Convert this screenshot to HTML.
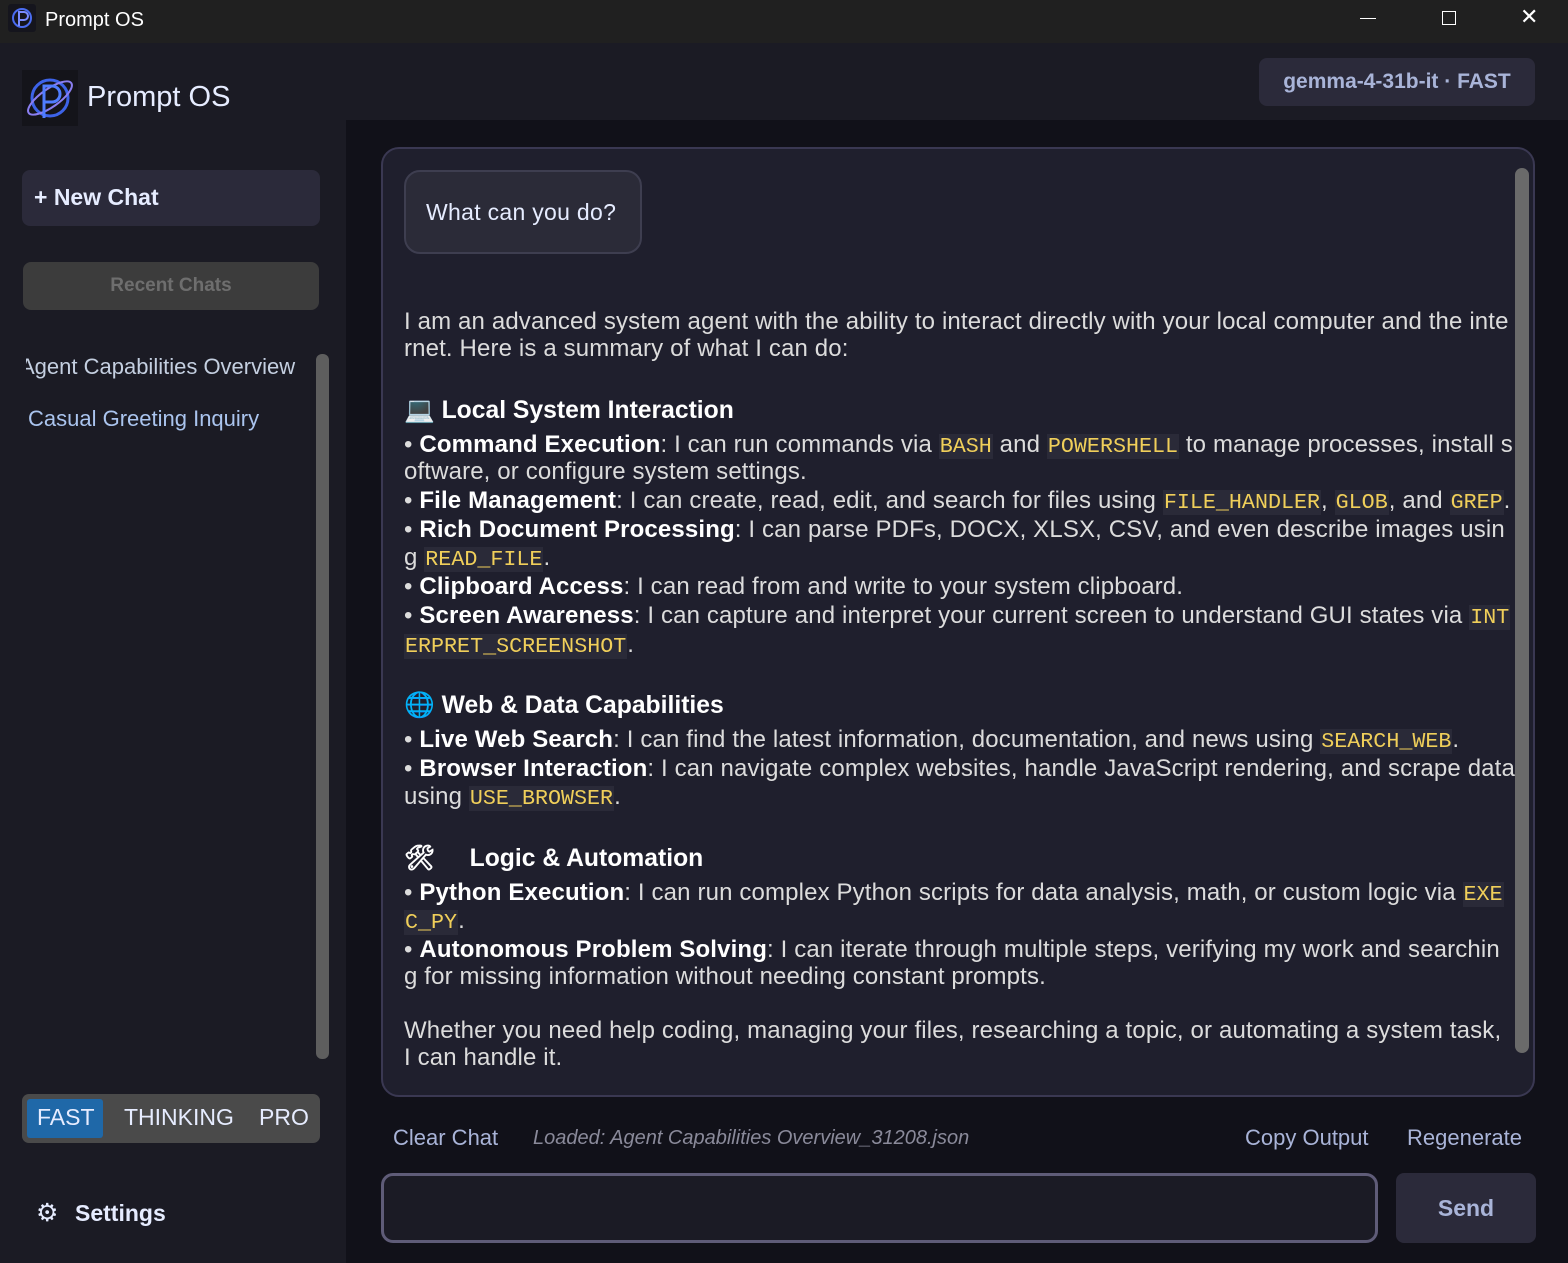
<!DOCTYPE html>
<html><head><meta charset="utf-8"><style>
*{margin:0;padding:0;box-sizing:border-box}
body{width:1568px;height:1263px;background:#111119;font-family:"Liberation Sans",sans-serif;position:relative;overflow:hidden;color:#dcdcdc}
.a{position:absolute;white-space:nowrap}
.tb{left:0;top:0;width:1568px;height:43px;background:#202020}
.side{left:0;top:43px;width:346px;height:1220px;background:#1b1b24}
.topbar{left:346px;top:43px;width:1222px;height:77px;background:#1b1b24}
.L{position:absolute;left:404px;font-size:24px;letter-spacing:0.14px;line-height:28px;white-space:nowrap;color:#dcdcdc}
.H{font-weight:bold;color:#fff;font-size:24.7px;letter-spacing:0}
b{color:#fff}
code{font-family:"Liberation Mono",monospace;color:#f0cf5a;background:#2a2a38;font-size:21.7px;letter-spacing:0;padding:0 1px}
</style></head><body>
<div class="a tb"></div>
<div class="a" style="left:8px;top:4px;width:28px;height:28px;background:#15151d;border-radius:3px"><svg width="28" height="28"><circle cx="14" cy="14" r="9" fill="none" stroke="#4a6cf0" stroke-width="2"/><path d="M11 22V8h5a4 4 0 010 8h-5" fill="none" stroke="#7a8cff" stroke-width="2"/></svg></div>
<div class="a" style="left:45px;top:9px;font-size:20px;color:#fff">Prompt OS</div>
<div class="a" style="left:1360px;top:18px;width:16px;height:1px;background:#fff"></div>
<div class="a" style="left:1442px;top:11px;width:14px;height:14px;border:1px solid #fff"></div>
<div class="a" style="left:1520px;top:4px;font-size:22px;color:#fff">✕</div>
<div class="a side"></div>
<div class="a topbar"></div>
<div class="a" style="left:22px;top:70px;width:56px;height:56px;background:#14141a"><svg width="56" height="56"><circle cx="28" cy="28" r="18" fill="none" stroke="#3d63e8" stroke-width="3"/><ellipse cx="28" cy="28" rx="26" ry="9" transform="rotate(-35 28 28)" fill="none" stroke="#8a7ef0" stroke-width="2"/><path d="M22 48V16h8a8 8 0 010 16h-8" fill="none" stroke="#4f7dff" stroke-width="3"/></svg></div>
<div class="a" style="left:87px;top:81px;font-size:29px;color:#e6ecff">Prompt OS</div>
<div class="a" style="left:22px;top:170px;width:298px;height:56px;background:#2b2a3a;border-radius:8px"></div>
<div class="a" style="left:34px;top:184px;font-size:23px;font-weight:bold;color:#e6ecff">+ New Chat</div>
<div class="a" style="left:23px;top:262px;width:296px;height:48px;background:#3c3c3c;border-radius:8px;text-align:center;line-height:48px;font-size:19px;font-weight:bold;color:#6e6e6e">Recent Chats</div>
<div class="a" style="left:26px;top:354px;width:274px;overflow:hidden;font-size:22px;color:#c4cfe0"><span style="margin-left:-6px">Agent Capabilities Overview</span></div>
<div class="a" style="left:28px;top:406px;font-size:22px;color:#aac4ee">Casual Greeting Inquiry</div>
<div class="a" style="left:316px;top:354px;width:13px;height:705px;background:#5e5e5e;border-radius:6px"></div>
<div class="a" style="left:22px;top:1094px;width:298px;height:49px;background:#4a4a4a;border-radius:7px"></div>
<div class="a" style="left:27px;top:1099px;width:76px;height:39px;background:#1f68a8;border-radius:3px"></div>
<div class="a" style="left:37px;top:1104px;font-size:23px;color:#e6ecff">FAST</div>
<div class="a" style="left:124px;top:1104px;font-size:23px;color:#e6ecff">THINKING</div>
<div class="a" style="left:259px;top:1104px;font-size:23px;color:#e6ecff">PRO</div>
<div class="a" style="left:36px;top:1198px;font-size:25px;color:#e6ecff">⚙</div>
<div class="a" style="left:75px;top:1200px;font-size:23px;font-weight:bold;color:#e6ecff">Settings</div>
<div class="a" style="left:1259px;top:58px;width:276px;height:48px;background:#2b2a3a;border-radius:8px;text-align:center;line-height:48px;font-size:21px;font-weight:bold;color:#a9b4d8">gemma-4-31b-it · FAST</div>
<div class="a" style="left:381px;top:147px;width:1154px;height:950px;background:#1f1f2d;border:2px solid #3a3852;border-radius:18px"></div>
<div class="a" style="left:1515px;top:168px;width:14px;height:885px;background:#6a6a6a;border-radius:7px"></div>
<div class="a" style="left:404px;top:170px;width:238px;height:84px;background:#2b2b38;border:2px solid #3e3e50;border-radius:16px"></div>
<div class="a" style="left:426px;top:199px;font-size:23px;letter-spacing:0.3px;color:#e6ecff">What can you do?</div>

<div class="L" style="top:308px">I am an advanced system agent with the ability to interact directly with your local computer and the inte</div>
<div class="L" style="top:335px">rnet. Here is a summary of what I can do:</div>
<div class="L H" style="top:397px">💻 Local System Interaction</div>
<div class="L" style="top:431px">• <b>Command Execution</b>: I can run commands via <code>BASH</code> and <code>POWERSHELL</code> to manage processes, install s</div>
<div class="L" style="top:458px">oftware, or configure system settings.</div>
<div class="L" style="top:487px">• <b>File Management</b>: I can create, read, edit, and search for files using <code>FILE_HANDLER</code>, <code>GLOB</code>, and <code>GREP</code>.</div>
<div class="L" style="top:516px">• <b>Rich Document Processing</b>: I can parse PDFs, DOCX, XLSX, CSV, and even describe images usin</div>
<div class="L" style="top:544px">g <code>READ_FILE</code>.</div>
<div class="L" style="top:573px">• <b>Clipboard Access</b>: I can read from and write to your system clipboard.</div>
<div class="L" style="top:602px">• <b>Screen Awareness</b>: I can capture and interpret your current screen to understand GUI states via <code>INT</code></div>
<div class="L" style="top:631px"><code>ERPRET_SCREENSHOT</code>.</div>
<div class="L H" style="top:692px">🌐 Web &amp; Data Capabilities</div>
<div class="L" style="top:726px">• <b>Live Web Search</b>: I can find the latest information, documentation, and news using <code>SEARCH_WEB</code>.</div>
<div class="L" style="top:755px">• <b>Browser Interaction</b>: I can navigate complex websites, handle JavaScript rendering, and scrape data</div>
<div class="L" style="top:783px">using <code>USE_BROWSER</code>.</div>
<div class="L H" style="top:845px">🛠&nbsp;&nbsp;&nbsp;&nbsp;&nbsp;Logic &amp; Automation</div>
<div class="L" style="top:879px">• <b>Python Execution</b>: I can run complex Python scripts for data analysis, math, or custom logic via <code>EXE</code></div>
<div class="L" style="top:907px"><code>C_PY</code>.</div>
<div class="L" style="top:936px">• <b>Autonomous Problem Solving</b>: I can iterate through multiple steps, verifying my work and searchin</div>
<div class="L" style="top:963px">g for missing information without needing constant prompts.</div>
<div class="L" style="top:1017px">Whether you need help coding, managing your files, researching a topic, or automating a system task,</div>
<div class="L" style="top:1044px">I can handle it.</div>

<div class="a" style="left:393px;top:1125px;font-size:22px;color:#a9b4d8">Clear Chat</div>
<div class="a" style="left:533px;top:1127px;font-size:20px;font-style:italic;color:#8a8a9a">Loaded: Agent Capabilities Overview_31208.json</div>
<div class="a" style="left:1245px;top:1125px;font-size:22px;color:#a9b4d8">Copy Output</div>
<div class="a" style="left:1407px;top:1125px;font-size:22px;color:#a9b4d8">Regenerate</div>
<div class="a" style="left:381px;top:1173px;width:997px;height:70px;background:#1b1b25;border:3px solid #5f5c78;border-radius:12px"></div>
<div class="a" style="left:1396px;top:1173px;width:140px;height:70px;background:#2b2a3a;border-radius:8px;text-align:center;line-height:70px;font-size:23px;font-weight:bold;color:#a9b4d8">Send</div>
</body></html>
